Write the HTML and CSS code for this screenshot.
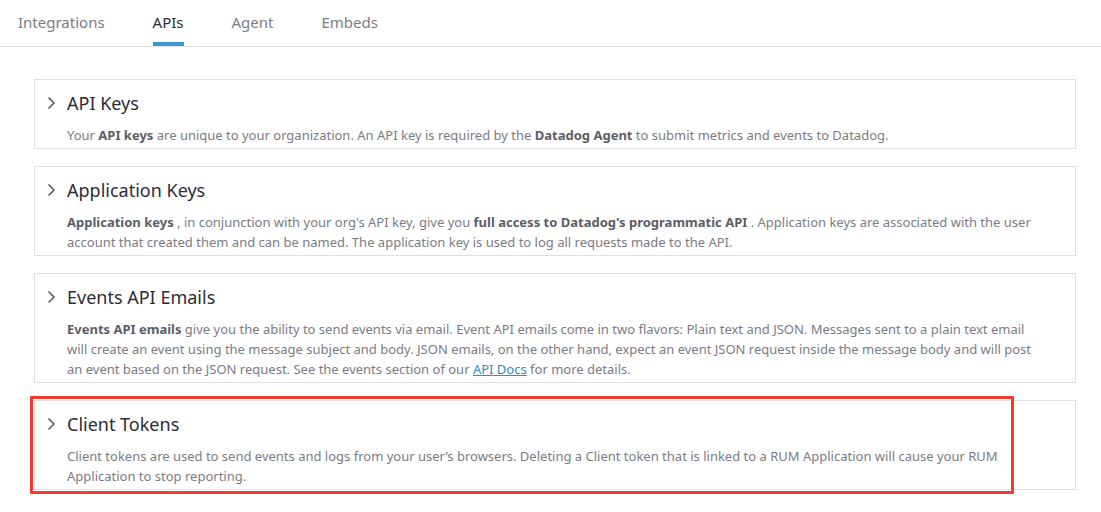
FILE: index.html
```html
<!DOCTYPE html>
<html>
<head>
<meta charset="utf-8">
<link rel="stylesheet" href="styles.css">
</head>
<body>
<nav class="tabs">
  <div class="tab">Integrations</div>
  <div class="tab active">APIs</div>
  <div class="tab">Agent</div>
  <div class="tab">Embeds</div>
</nav>
<main class="sections">
  <section class="card">
    <div class="card-head">
      <svg class="chev" width="9" height="14" viewBox="0 0 9 14"><polyline points="1.5,1.5 7,7 1.5,12.5" fill="none" stroke="#55555d" stroke-width="1.5"/></svg>
      <h2>API Keys</h2>
    </div>
    <p class="card-body">Your <b>API keys</b> are unique to your organization. An API key is required by the <b>Datadog Agent</b> to submit metrics and events to Datadog.</p>
  </section>
  <section class="card">
    <div class="card-head">
      <svg class="chev" width="9" height="14" viewBox="0 0 9 14"><polyline points="1.5,1.5 7,7 1.5,12.5" fill="none" stroke="#55555d" stroke-width="1.5"/></svg>
      <h2>Application Keys</h2>
    </div>
    <p class="card-body"><b>Application keys</b> , in conjunction with your org's API key, give you <b>full access to Datadog's programmatic API</b> . Application keys are associated with the user account that created them and can be named. The application key is used to log all requests made to the API.</p>
  </section>
  <section class="card">
    <div class="card-head">
      <svg class="chev" width="9" height="14" viewBox="0 0 9 14"><polyline points="1.5,1.5 7,7 1.5,12.5" fill="none" stroke="#55555d" stroke-width="1.5"/></svg>
      <h2>Events API Emails</h2>
    </div>
    <p class="card-body"><b>Events API emails</b> give you the ability to send events via email. Event API emails come in two flavors: Plain text and JSON. Messages sent to a plain text email will create an event using the message subject and body. JSON emails, on the other hand, expect an event JSON request inside the message body and will post an event based on the JSON request. See the events section of our <a href="#">API Docs</a> for more details.</p>
  </section>
  <section class="card highlighted">
    <div class="card-head">
      <svg class="chev" width="9" height="14" viewBox="0 0 9 14"><polyline points="1.5,1.5 7,7 1.5,12.5" fill="none" stroke="#55555d" stroke-width="1.5"/></svg>
      <h2>Client Tokens</h2>
    </div>
    <p class="card-body">Client tokens are used to send events and logs from your user’s browsers. Deleting a Client token that is linked to a RUM Application will cause your RUM Application to stop reporting.</p>
    <div class="annotation"></div>
  </section>
</main>
</body>
</html>
```

FILE: styles.css
```css
* { box-sizing: border-box; }
html, body {
  margin: 0;
  padding: 0;
  background: #ffffff;
  font-family: "Noto Sans", "Open Sans", sans-serif;
}
.tabs {
  display: flex;
  gap: 48px;
  padding-left: 18px;
  border-bottom: 1px solid #e1e1e4;
  height: 47px;
}
.tab {
  padding-top: 12px;
  font-size: 15px;
  line-height: 20px;
  color: #7c7c86;
  height: 46px;
  border-bottom: 4px solid transparent;
}
.tab.active {
  color: #2c2c36;
  border-bottom-color: #3d98cc;
}
.sections {
  display: flex;
  flex-direction: column;
  gap: 17px;
  padding: 32px 25px 22px 34px;
}
.card {
  position: relative;
  border: 1px solid #dfdfe3;
  padding: 11px 34px 3px 12px;
}
.card-head {
  display: flex;
  align-items: center;
  gap: 11px;
  height: 24px;
}
.chev { display: block; flex: none; }
.card-head h2 {
  margin: 0;
  font-size: 18px;
  line-height: 24px;
  font-weight: 400;
  color: #2c2c36;
}
.card-body {
  margin: 10px 0 0 20px;
  font-size: 13px;
  line-height: 20px;
  color: #7b7b85;
}
.card-body b {
  font-weight: 700;
  color: #5d5d67;
}
.card-body a {
  color: #2f8cc4;
  text-decoration: underline;
}
.annotation {
  position: absolute;
  left: -5px;
  top: -5px;
  bottom: -5px;
  width: 984px;
  border: 3px solid #f33a2f;
  border-radius: 1px;
  pointer-events: none;
}
```
